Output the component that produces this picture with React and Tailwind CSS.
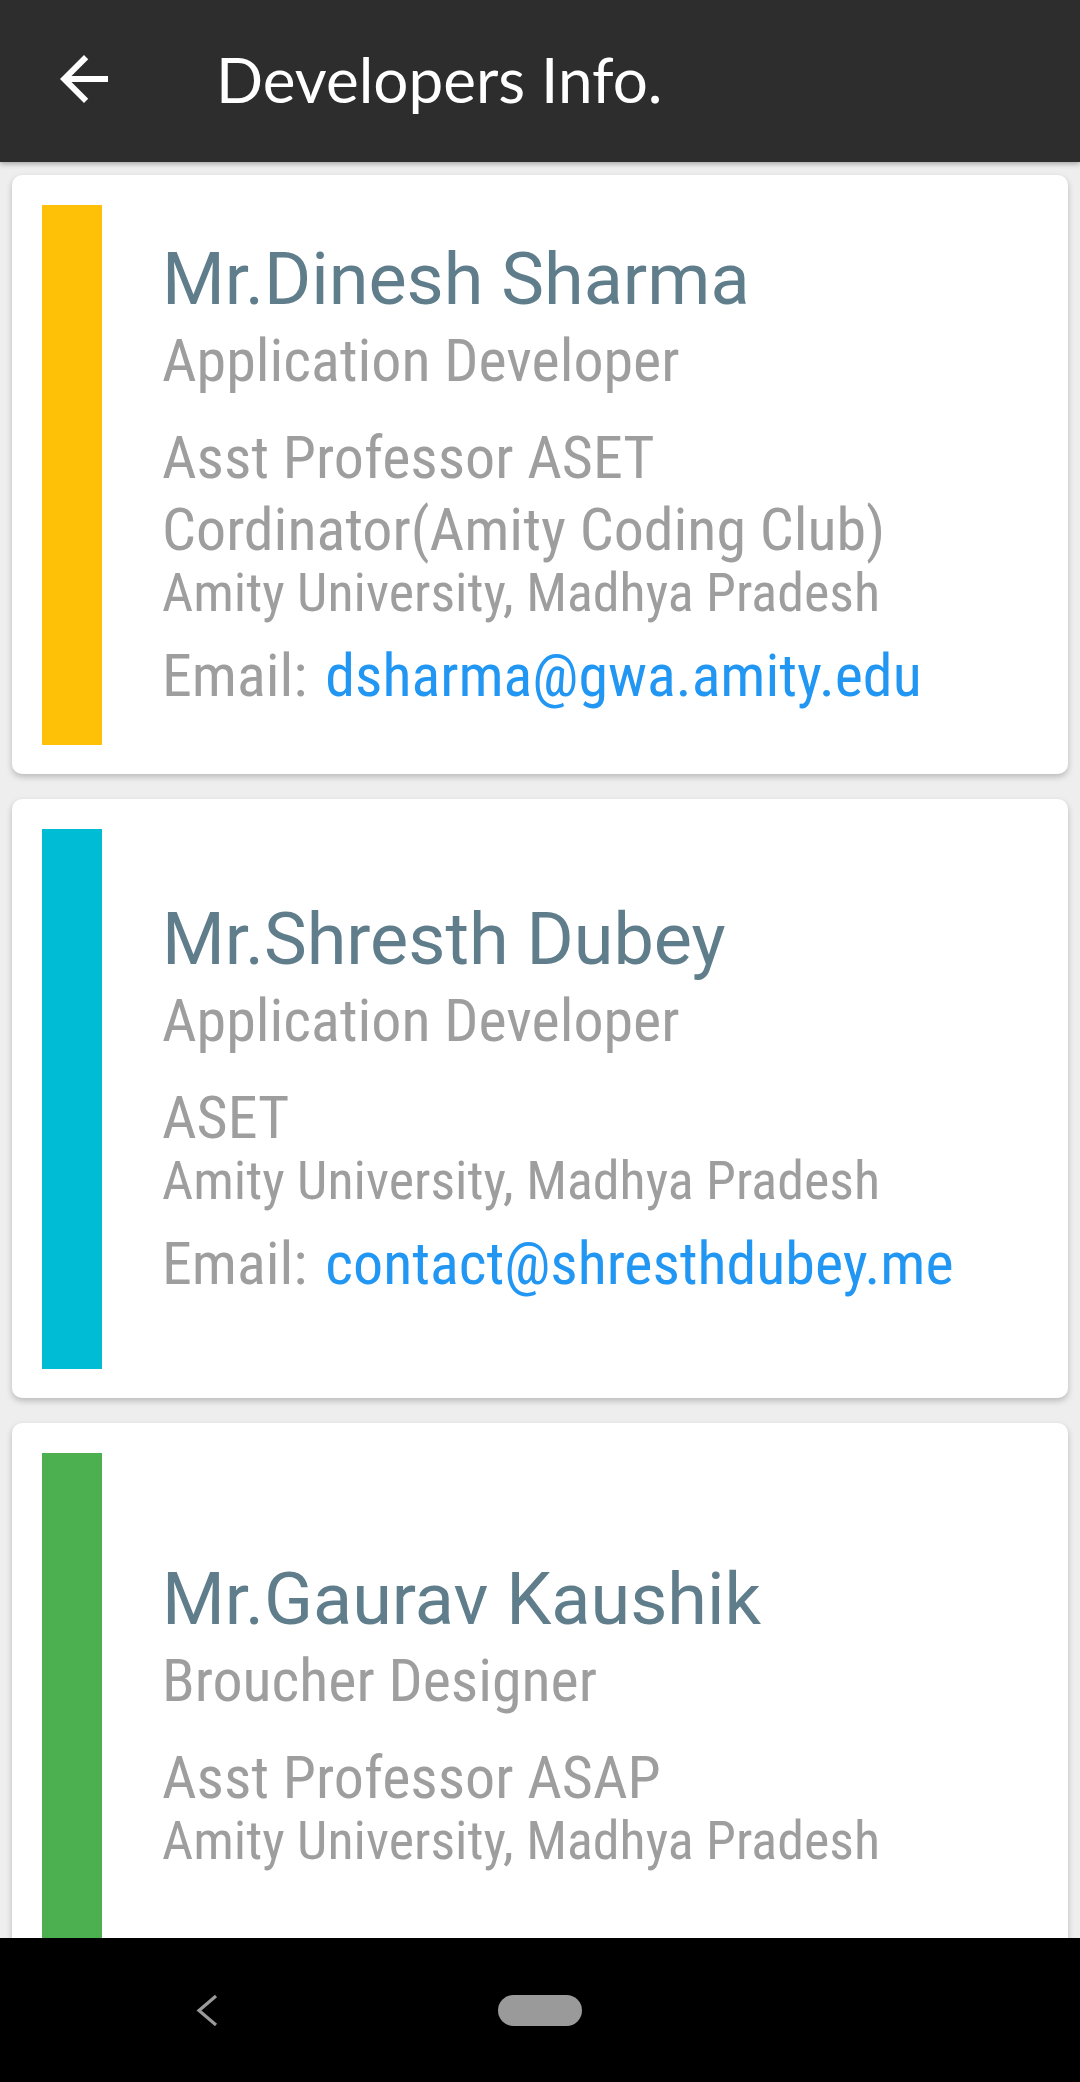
import React from "react";

const G = "font-['Roboto_Condensed','Roboto',sans-serif] text-[#9e9e9e]";

const cards = [
  {
    bar: "bg-[#ffc107]",
    name: "Mr.Dinesh Sharma",
    role: "Application Developer",
    org: ["Asst Professor ASET", "Cordinator(Amity Coding Club)"],
    email: "dsharma@gwa.amity.edu",
    extra: "",
  },
  {
    bar: "bg-[#00bcd4]",
    name: "Mr.Shresth Dubey",
    role: "Application Developer",
    org: ["ASET"],
    email: "contact@shresthdubey.me",
    extra: "",
  },
  {
    bar: "bg-[#4caf50]",
    name: "Mr.Gaurav Kaushik",
    role: "Broucher Designer",
    org: ["Asst Professor ASAP"],
    email: null,
    extra: "pb-[20px]",
  },
];

function Card({ c }) {
  return (
    <div className="shrink-0 h-[599px] bg-white rounded-[10px] shadow-[0_3px_6px_rgba(0,0,0,0.22)] flex items-center pl-[30px]">
      <div className={`w-[60px] h-[540px] shrink-0 ${c.bar}`} />
      <div className={`ml-[60px] flex flex-col ${c.extra}`}>
        <div className="font-['Roboto',sans-serif] text-[72px] leading-[84px] text-[#607d8b] whitespace-nowrap">
          {c.name}
        </div>
        <div className={`${G} mt-[4px] text-[60px] leading-[70px] whitespace-nowrap`}>{c.role}</div>
        <div className="mt-[26px] flex flex-col">
          {c.org.map((o) => (
            <div key={o} className={`${G} text-[60px] leading-[72px] whitespace-nowrap`}>
              {o}
            </div>
          ))}
          <div className={`${G} text-[54px] leading-[54px] whitespace-nowrap`}>
            Amity University, Madhya Pradesh
          </div>
          {c.email && (
            <div className={`${G} mt-[20px] text-[60px] leading-[72px] whitespace-nowrap`}>
              Email:<span className="ml-[18px] text-[#2196f3]">{c.email}</span>
            </div>
          )}
        </div>
      </div>
    </div>
  );
}

export default function App() {
  return (
    <div className="w-[1080px] h-[2082px] flex flex-col overflow-hidden bg-[#eeeeee]">
      <header className="relative z-10 h-[162px] shrink-0 bg-[#2d2d2d] shadow-[0_2px_5px_rgba(0,0,0,0.3)] flex items-center">
        <svg className="ml-[48px] -mt-[4px] w-[72px] h-[72px]" viewBox="0 0 24 24" fill="#ffffff">
          <path d="M20 11H7.83l5.59-5.59L12 4l-8 8 8 8 1.41-1.41L7.83 13H20v-2z" />
        </svg>
        <h1 className="ml-[96px] -mt-[5px] text-white text-[62px] leading-none font-['Lato',sans-serif] font-normal">
          Developers Info.
        </h1>
      </header>
      <main className="flex-1 min-h-0 overflow-hidden px-[12px] pt-[13px] flex flex-col gap-[25px]">
        {cards.map((c) => (
          <Card key={c.name} c={c} />
        ))}
      </main>
      <nav className="h-[144px] shrink-0 bg-black flex items-center">
        <svg className="ml-[196px] w-[24px] h-[32px]" viewBox="0 0 24 32" fill="none">
          <polyline points="20,2 3,16.5 20,31" stroke="#9a9a9a" strokeWidth="3.2" />
        </svg>
        <div className="ml-[278px] w-[84px] h-[31px] rounded-full bg-[#9a9a9a]" />
      </nav>
    </div>
  );
}
